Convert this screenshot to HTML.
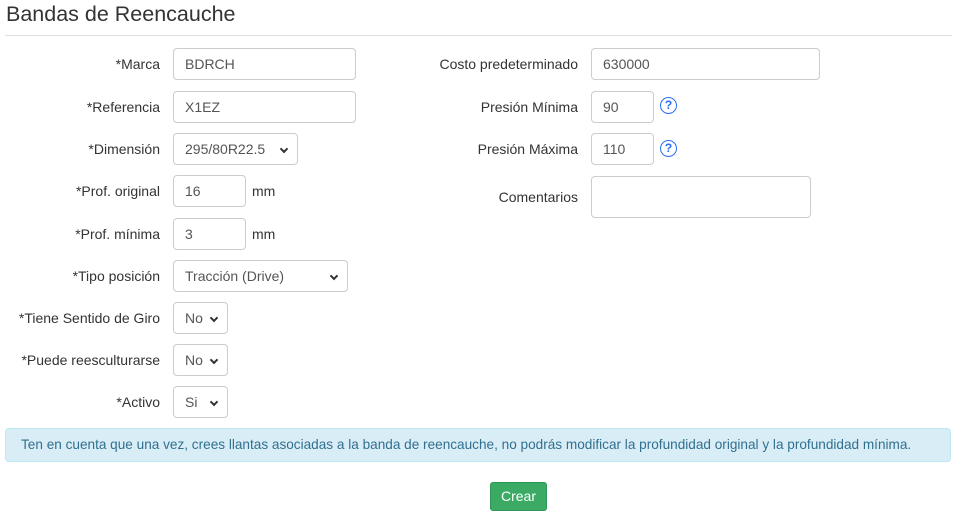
<!DOCTYPE html>
<html><head><meta charset="utf-8"><style>
body{margin:0;width:954px;height:520px;background:#fff;font-family:"Liberation Sans",sans-serif;font-size:14px;color:#333;position:relative;overflow:hidden}
.a{position:absolute}
h1{position:absolute;left:6px;top:2px;margin:0;font-size:21.5px;font-weight:normal;color:#333}
.hr{position:absolute;left:5px;top:35px;width:947px;height:1px;background:#ddd}
.lbl{position:absolute;text-align:right;line-height:32px;height:32px}
.l1{left:0;width:160px}.l2{left:380px;width:198px}
.in{position:absolute;box-sizing:border-box;border:1px solid #ccc;border-radius:4px;height:32px;line-height:30px;padding-left:11px;color:#555;background:#fff}
.sel::after{content:"";position:absolute;right:10px;top:12px;width:4px;height:4px;border-right:2px solid #333;border-bottom:2px solid #333;transform:rotate(45deg)}
.q{position:absolute;width:15px;height:15px;border:1.5px solid #2a6df4;border-radius:50%;color:#2a6df4;font-size:12px;font-weight:bold;text-align:center;line-height:15px}
.mm{position:absolute;line-height:32px}
</style></head><body>
<h1>Bandas de Reencauche</h1>
<div class="hr"></div>

<div class="lbl l1" style="top:48px">*Marca</div><div class="in" style="left:173px;top:48px;width:183px">BDRCH</div>
<div class="lbl l1" style="top:91px">*Referencia</div><div class="in" style="left:173px;top:91px;width:183px">X1EZ</div>
<div class="lbl l1" style="top:133px">*Dimensión</div><div class="in sel" style="left:173px;top:133px;width:125px">295/80R22.5</div>
<div class="lbl l1" style="top:175px">*Prof. original</div><div class="in" style="left:173px;top:175px;width:73px">16</div><div class="mm" style="left:252px;top:175px">mm</div>
<div class="lbl l1" style="top:218px">*Prof. mínima</div><div class="in" style="left:173px;top:218px;width:73px">3</div><div class="mm" style="left:252px;top:218px">mm</div>
<div class="lbl l1" style="top:260px">*Tipo posición</div><div class="in sel" style="left:173px;top:260px;width:175px">Tracción (Drive)</div>
<div class="lbl l1" style="top:302px">*Tiene Sentido de Giro</div><div class="in sel" style="left:173px;top:302px;width:55px">No</div>
<div class="lbl l1" style="top:344px">*Puede reesculturarse</div><div class="in sel" style="left:173px;top:344px;width:55px">No</div>
<div class="lbl l1" style="top:386px">*Activo</div><div class="in sel" style="left:173px;top:386px;width:55px">Si</div>

<div class="lbl l2" style="top:48px">Costo predeterminado</div><div class="in" style="left:591px;top:48px;width:229px">630000</div>
<div class="lbl l2" style="top:91px">Presión Mínima</div><div class="in" style="left:591px;top:91px;width:63px">90</div><div class="q" style="left:660px;top:97px">?</div>
<div class="lbl l2" style="top:133px">Presión Máxima</div><div class="in" style="left:591px;top:133px;width:63px">110</div><div class="q" style="left:660px;top:140px">?</div>
<div class="lbl l2" style="top:181px">Comentarios</div><div class="in" style="left:591px;top:176px;width:220px;height:42px"></div>

<div class="a" style="left:5px;top:428px;width:946px;height:34px;box-sizing:border-box;background:#d9edf7;border:1px solid #bce8f1;border-radius:4px;color:#31708f;line-height:32px;padding-left:15px;font-size:13.6px;white-space:nowrap">Ten en cuenta que una vez, crees llantas asociadas a la banda de reencauche, no podrás modificar la profundidad original y la profundidad mínima.</div>

<div class="a" style="left:490px;top:482px;width:57px;height:29px;box-sizing:border-box;background:#3aaa64;border:1px solid #2f9656;border-radius:3px;color:#fff;text-align:center;line-height:27px">Crear</div>
</body></html>
